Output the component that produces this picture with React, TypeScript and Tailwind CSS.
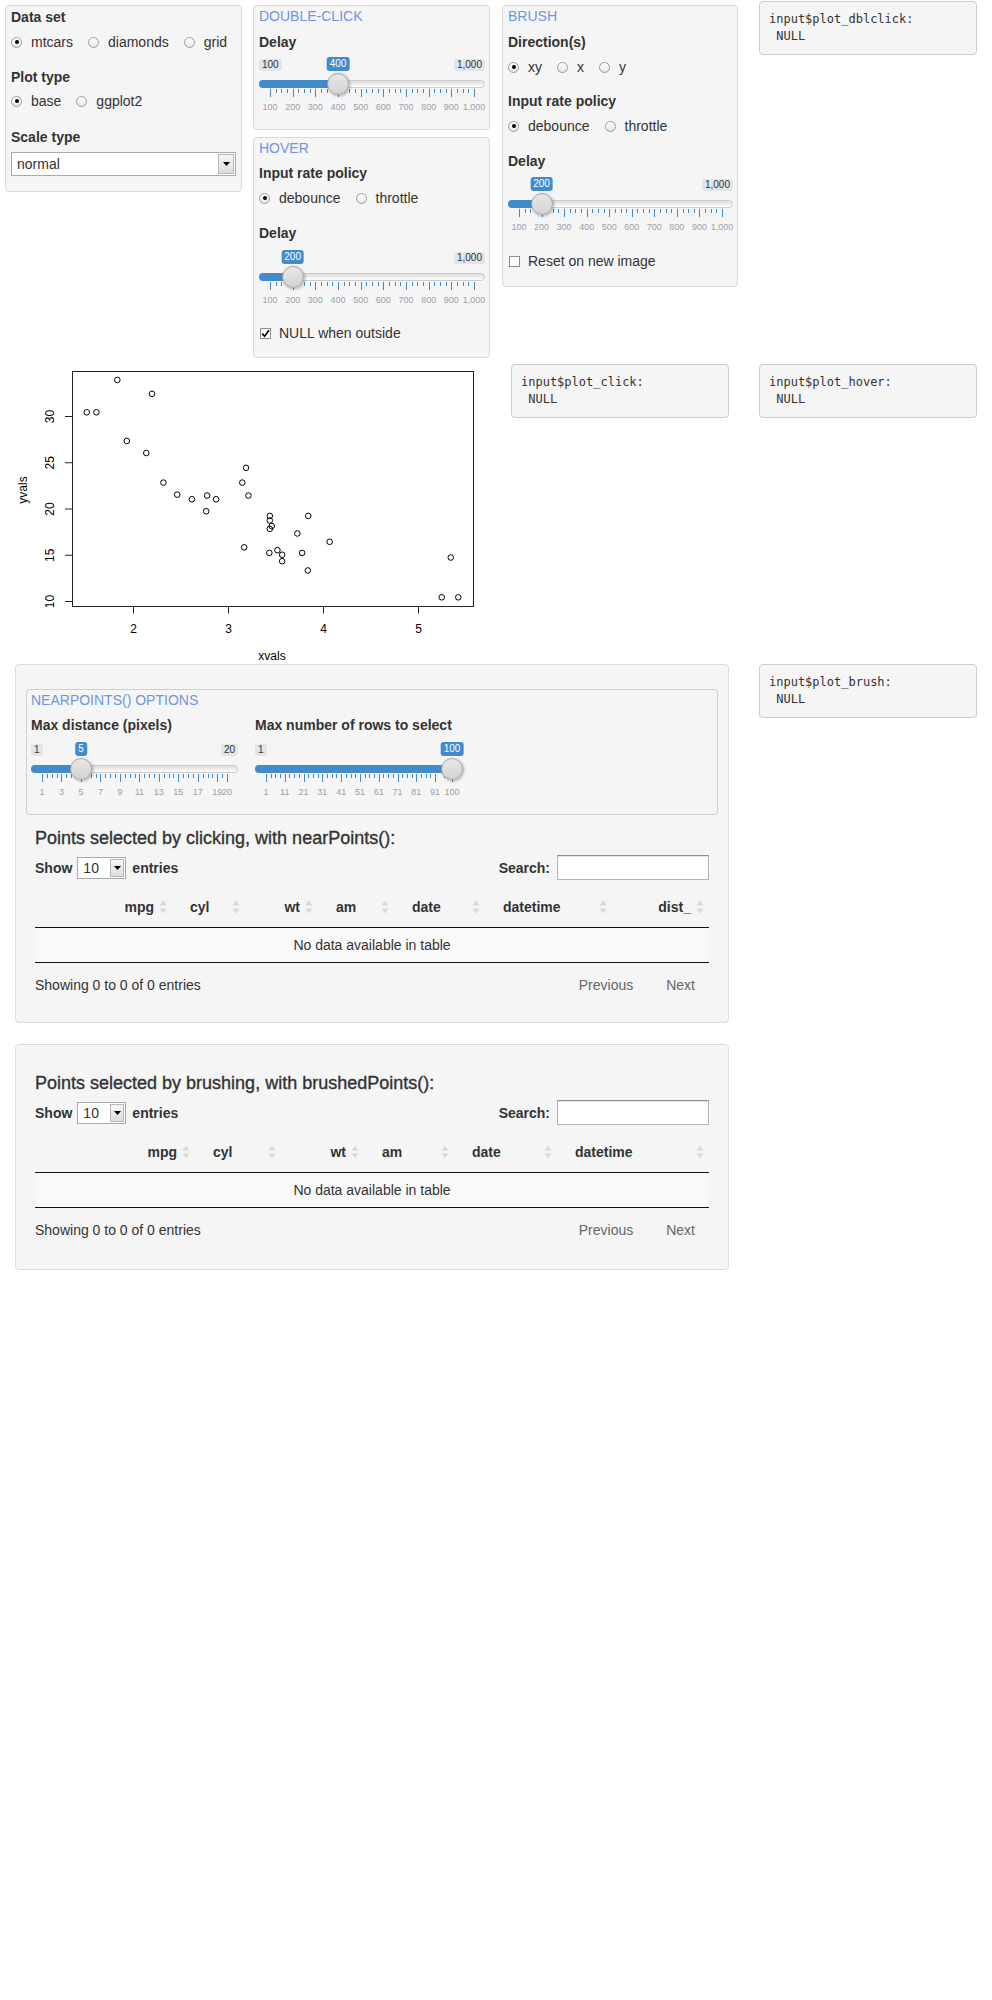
import React from "react";

const TITLE = "leading-[20px] text-[#6e95df]";
const LABEL = "font-bold leading-[20px]";

const MTCARS: [number, number][] = [
  [2.62, 21.0], [2.875, 21.0], [2.32, 22.8], [3.215, 21.4], [3.44, 18.7], [3.46, 18.1],
  [3.57, 14.3], [3.19, 24.4], [3.15, 22.8], [3.44, 19.2], [3.44, 17.8], [4.07, 16.4],
  [3.73, 17.3], [3.78, 15.2], [5.25, 10.4], [5.424, 10.4], [5.345, 14.7], [2.2, 32.4],
  [1.615, 30.4], [1.835, 33.9], [2.465, 21.5], [3.52, 15.5], [3.435, 15.2], [3.84, 13.3],
  [3.845, 19.2], [1.935, 27.3], [2.14, 26.0], [1.513, 30.4], [3.17, 15.8], [2.77, 19.7],
  [3.57, 15.0], [2.78, 21.4],
];

const fmt = (n: number) => n.toLocaleString("en-US");

function Well({ className = "", children }: { className?: string; children?: React.ReactNode }) {
  return <div className={`rounded-[4px] border bg-[#f5f5f5] ${className}`}>{children}</div>;
}

function Output({ name, className = "" }: { name: string; className?: string }) {
  return (
    <pre
      className={`mx-[15px] rounded-[4px] border border-[#cccccc] bg-[#f5f5f5] p-[9px] font-['DejaVu_Sans_Mono',monospace] text-[12px] leading-[17px] text-[#333] ${className}`}
    >
      {`input$${name}:\n NULL`}
    </pre>
  );
}

function Radio({ label, checked = false }: { label: string; checked?: boolean }) {
  return (
    <span className="inline-flex items-center gap-[9px]">
      <span className="flex h-[11px] w-[11px] items-center justify-center rounded-full border border-[#9c9c9c] bg-[linear-gradient(to_bottom,#ffffff,#e6e6e6)]">
        {checked && <span className="h-[4px] w-[4px] rounded-full bg-black" />}
      </span>
      {label}
    </span>
  );
}

function RadioRow({ items, className = "" }: { items: string[]; className?: string }) {
  return (
    <div className={`flex h-[20px] items-center gap-[15px] ${className}`}>
      {items.map((it, i) => (
        <Radio key={it} label={it} checked={i === 0} />
      ))}
    </div>
  );
}

function Checkbox({ label, checked = false, className = "" }: { label: string; checked?: boolean; className?: string }) {
  return (
    <div className={`flex h-[20px] items-center gap-[8px] pl-[1px] ${className}`}>
      <span className="flex h-[11px] w-[11px] items-center justify-center border border-[#8c8c8c] bg-white">
        {checked && (
          <svg width="9" height="9" viewBox="0 0 9 9">
            <path d="M1.2 4.6 L3.6 7.2 L8 1.2" fill="none" stroke="#000" strokeWidth="1.6" />
          </svg>
        )}
      </span>
      {label}
    </div>
  );
}

function Caret() {
  return (
    <svg width="7" height="4" viewBox="0 0 7 4">
      <path d="M0 0H7L3.5 4Z" fill="#000" />
    </svg>
  );
}

type SliderProps = {
  width: number;
  wClass: string;
  min: number;
  max: number;
  value: number;
  grid: number[];
  showMin?: boolean;
  showMax?: boolean;
  className?: string;
};

function Slider({ width, wClass, min, max, value, grid, showMin = true, showMax = true, className = "" }: SliderProps) {
  const pos = (v: number) => 11 + ((v - min) / (max - min)) * (width - 22);
  const hx = pos(value);
  const step = grid[1] - grid[0];
  const ticks: { x: number; big: boolean }[] = [];
  grid.forEach((g, i) => {
    if (i > 0) {
      const prev = grid[i - 1];
      const n = g - prev < step ? 1 : 3;
      for (let z = 1; z <= n; z++) {
        ticks.push({ x: pos(prev) + ((pos(g) - pos(prev)) * z) / (n + 1), big: false });
      }
    }
    ticks.push({ x: pos(g), big: true });
  });

  return (
    <div className={`relative h-[57px] ${wClass} ${className}`}>
      {showMin && (
        <span className="absolute left-0 top-[2px] rounded-[3px] bg-[#e1e4e9] px-[3px] text-[10px] leading-[12px] text-[#333]">
          {fmt(min)}
        </span>
      )}
      {showMax && (
        <span className="absolute right-0 top-[2px] rounded-[3px] bg-[#e1e4e9] px-[3px] text-[10px] leading-[12px] text-[#333]">
          {fmt(max)}
        </span>
      )}
      <span
        className="absolute top-0 -translate-x-1/2 rounded-[3px] bg-[#428bca] px-[3px] text-[10px] leading-[14px] text-white"
        style={{ left: hx }}
      >
        {fmt(value)}
      </span>
      <div className="absolute inset-x-0 top-[23px] h-[8px] rounded-full border border-[#cccccc] bg-[linear-gradient(to_bottom,#dcdcdc,#ffffff)]" />
      <div className="absolute left-0 top-[23px] h-[8px] rounded-l-full bg-[#428bca]" style={{ width: hx }} />
      {ticks.map((t, i) => (
        <span
          key={i}
          className={`absolute top-[32px] w-px bg-[#428bca] ${t.big ? "h-[8px]" : "h-[4px]"}`}
          style={{ left: Math.round(t.x) }}
        />
      ))}
      {grid.map((g) => (
        <span
          key={g}
          className="absolute top-[44px] -translate-x-1/2 text-[9px] leading-[12px] text-[#98a0ab]"
          style={{ left: pos(g) }}
        >
          {fmt(g)}
        </span>
      ))}
      <span
        className="absolute top-[16px] h-[22px] w-[22px] rounded-full border border-[#a6a6a6] bg-[linear-gradient(to_bottom,#e8e8e8,#d2d2d2)] shadow-[1px_1px_3px_rgba(0,0,0,0.3)]"
        style={{ left: hx - 11 }}
      />
    </div>
  );
}

const DELAY_GRID = [100, 200, 300, 400, 500, 600, 700, 800, 900, 1000];

function Plot() {
  const X = (w: number) => 133 + (w - 2) * 95;
  const Y = (m: number) => 238 - (m - 10) * 9.25;
  return (
    <svg width="496" height="301" className="block" fontFamily="'Liberation Sans', Arial, sans-serif" fontSize="12">
      <rect x="72.5" y="8.5" width="401" height="235" fill="none" stroke="#222" />
      {[2, 3, 4, 5].map((v) => (
        <g key={v}>
          <line x1={X(v) + 0.5} x2={X(v) + 0.5} y1="243.5" y2="250.5" stroke="#222" />
          <text x={X(v) + 0.5} y="269.5" textAnchor="middle">
            {v}
          </text>
        </g>
      ))}
      {[10, 15, 20, 25, 30].map((v) => (
        <g key={v}>
          <line x1="65" x2="72.5" y1={Y(v) + 0.5} y2={Y(v) + 0.5} stroke="#222" />
          <text x="54" y={Y(v) + 0.5} textAnchor="middle" transform={`rotate(-90 54 ${Y(v) + 0.5})`}>
            {v}
          </text>
        </g>
      ))}
      <text x="27" y="127" textAnchor="middle" transform="rotate(-90 27 127)">
        yvals
      </text>
      <text x="272" y="297" textAnchor="middle">
        xvals
      </text>
      {MTCARS.map(([w, m], i) => (
        <circle key={i} cx={X(w)} cy={Y(m)} r="2.8" fill="none" stroke="#000" strokeWidth="1" />
      ))}
    </svg>
  );
}

type Col = { name: string; w: string; right?: boolean; sort?: boolean };

function SortBoth() {
  return (
    <svg className="absolute right-[5px] top-1/2 -translate-y-1/2" width="8" height="13" viewBox="0 0 8 13">
      <path d="M4 0 L7.5 5 L0.5 5 Z" fill="#d9d9d9" />
      <path d="M0.5 8 L7.5 8 L4 13 Z" fill="#d9d9d9" />
    </svg>
  );
}

function DataTable({ title, cols, className = "" }: { title: string; cols: Col[]; className?: string }) {
  return (
    <div className={`px-[9px] ${className}`}>
      <div className="text-[18px] leading-[20px] text-[#333] [-webkit-text-stroke:0.35px_#333]">{title}</div>
      <div className="mt-[7px] flex h-[25px] items-center justify-between">
        <div className="flex items-center font-bold">
          <span>Show</span>
          <span className="ml-[5px] flex h-[22px] w-[49px] items-stretch border border-[#a9a9a9] bg-white font-normal">
            <span className="flex-1 pl-[5px] leading-[20px]">10</span>
            <span className="m-[1px] flex w-[14px] items-center justify-center border border-[#b8b8b8] bg-[linear-gradient(to_bottom,#f7f7f7,#dcdcdc)]">
              <Caret />
            </span>
          </span>
          <span className="ml-[6px]">entries</span>
        </div>
        <div className="flex items-center font-bold">
          <span>Search:</span>
          <span className="ml-[7px] h-[25px] w-[152px] border border-[#b4b4b4] border-t-[#8e8e8e] bg-white shadow-[inset_0_1px_1px_rgba(0,0,0,0.12)]" />
        </div>
      </div>
      <table className="mt-[7px] w-full table-fixed border-collapse">
        <colgroup>
          {cols.map((c, i) => (
            <col key={i} className={c.w} />
          ))}
        </colgroup>
        <thead>
          <tr>
            {cols.map((c, i) => (
              <th
                key={i}
                className={`relative border-b border-[#111] px-[18px] py-[10px] font-bold leading-[20px] ${
                  c.right ? "text-right" : "text-left"
                }`}
              >
                {c.name}
                {c.sort !== false && <SortBoth />}
              </th>
            ))}
          </tr>
        </thead>
        <tbody>
          <tr>
            <td colSpan={cols.length} className="border-b border-[#111] bg-[#f9f9f9] py-[7px] text-center leading-[20px]">
              No data available in table
            </td>
          </tr>
        </tbody>
      </table>
      <div className="mt-[12px] flex items-center justify-between leading-[20px]">
        <span>Showing 0 to 0 of 0 entries</span>
        <div className="flex gap-[5px] text-[#666]">
          <span className="px-[14px]">Previous</span>
          <span className="px-[14px]">Next</span>
        </div>
      </div>
    </div>
  );
}

const NEAR_COLS: Col[] = [
  { name: "", w: "w-[65px]", sort: false },
  { name: "mpg", w: "w-[72px]", right: true },
  { name: "cyl", w: "w-[73px]" },
  { name: "wt", w: "w-[73px]", right: true },
  { name: "am", w: "w-[76px]" },
  { name: "date", w: "w-[91px]" },
  { name: "datetime", w: "w-[127px]" },
  { name: "dist_", w: "w-[97px]", right: true },
];

const BRUSH_COLS: Col[] = [
  { name: "", w: "w-[85px]", sort: false },
  { name: "mpg", w: "w-[75px]", right: true },
  { name: "cyl", w: "w-[86px]" },
  { name: "wt", w: "w-[83px]", right: true },
  { name: "am", w: "w-[90px]" },
  { name: "date", w: "w-[103px]" },
  { name: "datetime", w: "w-[152px]" },
];

export default function App() {
  return (
    <div className="min-h-[2000px] w-[992px] bg-white font-['Liberation_Sans',Arial,sans-serif] text-[14px] leading-[20px] text-[#333]">
      {/* row 1: controls */}
      <div className="grid grid-cols-[248px_248px_248px_248px] items-start">
        <Well className="ml-[5px] mt-[5px] h-[187px] w-[237px] border-[#d9d9d9] px-[5px] pt-[1px]">
          <div className={LABEL}>Data set</div>
          <RadioRow className="mt-[5px]" items={["mtcars", "diamonds", "grid"]} />
          <div className={`mt-[15px] ${LABEL}`}>Plot type</div>
          <RadioRow className="mt-[4px]" items={["base", "ggplot2"]} />
          <div className={`mt-[16px] ${LABEL}`}>Scale type</div>
          <div className="mt-[5px] flex h-[24px] items-stretch border border-[#a9a9a9] bg-white">
            <span className="flex-1 pl-[5px] leading-[22px]">normal</span>
            <span className="m-[1px] flex w-[16px] items-center justify-center border border-[#b8b8b8] bg-[linear-gradient(to_bottom,#f7f7f7,#dcdcdc)]">
              <Caret />
            </span>
          </div>
        </Well>

        <div className="mb-[5px] ml-[5px] mt-[5px] flex w-[237px] flex-col gap-[7px]">
          <Well className="h-[125px] border-[#d9d9d9] px-[5px]">
            <div className={TITLE}>DOUBLE-CLICK</div>
            <div className={`mt-[6px] ${LABEL}`}>Delay</div>
            <Slider className="mt-[5px]" width={226} wClass="w-[226px]" min={100} max={1000} value={400} grid={DELAY_GRID} />
          </Well>
          <Well className="h-[221px] border-[#d9d9d9] px-[5px]">
            <div className={TITLE}>HOVER</div>
            <div className={`mt-[5px] ${LABEL}`}>Input rate policy</div>
            <RadioRow className="mt-[5px]" items={["debounce", "throttle"]} />
            <div className={`mt-[15px] ${LABEL}`}>Delay</div>
            <Slider
              className="mt-[7px]"
              width={226}
              wClass="w-[226px]"
              min={100}
              max={1000}
              value={200}
              grid={DELAY_GRID}
              showMin={false}
            />
            <Checkbox className="mt-[16px]" label="NULL when outside" checked />
          </Well>
        </div>

        <Well className="ml-[6px] mt-[5px] h-[282px] w-[236px] border-[#d9d9d9] px-[5px]">
          <div className={TITLE}>BRUSH</div>
          <div className={`mt-[6px] ${LABEL}`}>Direction(s)</div>
          <RadioRow className="mt-[5px]" items={["xy", "x", "y"]} />
          <div className={`mt-[14px] ${LABEL}`}>Input rate policy</div>
          <RadioRow className="mt-[5px]" items={["debounce", "throttle"]} />
          <div className={`mt-[15px] ${LABEL}`}>Delay</div>
          <Slider
            className="mt-[6px]"
            width={225}
            wClass="w-[225px]"
            min={100}
            max={1000}
            value={200}
            grid={DELAY_GRID}
            showMin={false}
          />
          <Checkbox className="mt-[17px]" label="Reset on new image" />
        </Well>

        <Output className="mt-[1px]" name="plot_dblclick" />
      </div>

      {/* row 2: plot + click/hover outputs */}
      <div className="grid grid-cols-[496px_248px_248px] items-start">
        <Plot />
        <Output className="mt-[1px]" name="plot_click" />
        <Output className="mt-[1px]" name="plot_hover" />
      </div>

      {/* row 3: tables */}
      <div className="grid grid-cols-[744px_248px] items-start">
        <div className="flex flex-col px-[15px]">
          <Well className="h-[359px] border-[#dcdcdc] px-[10px]">
            <Well className="mt-[24px] h-[126px] border-[#cfcfcf] px-[4px]">
              <div className={TITLE}>NEARPOINTS() OPTIONS</div>
              <div className="mt-[5px] flex gap-[17px]">
                <div className="w-[207px]">
                  <div className={LABEL}>Max distance (pixels)</div>
                  <Slider
                    className="mt-[7px]"
                    width={207}
                    wClass="w-[207px]"
                    min={1}
                    max={20}
                    value={5}
                    grid={[1, 3, 5, 7, 9, 11, 13, 15, 17, 19, 20]}
                  />
                </div>
                <div className="w-[208px]">
                  <div className={`whitespace-nowrap ${LABEL}`}>Max number of rows to select</div>
                  <Slider
                    className="mt-[7px]"
                    width={208}
                    wClass="w-[208px]"
                    min={1}
                    max={100}
                    value={100}
                    grid={[1, 11, 21, 31, 41, 51, 61, 71, 81, 91, 100]}
                    showMax={false}
                  />
                </div>
              </div>
            </Well>
            <DataTable className="mt-[13px]" title="Points selected by clicking, with nearPoints():" cols={NEAR_COLS} />
          </Well>

          <Well className="mt-[21px] h-[226px] border-[#dcdcdc] px-[10px]">
            <DataTable className="mt-[28px]" title="Points selected by brushing, with brushedPoints():" cols={BRUSH_COLS} />
          </Well>
        </div>
        <Output name="plot_brush" />
      </div>
    </div>
  );
}
